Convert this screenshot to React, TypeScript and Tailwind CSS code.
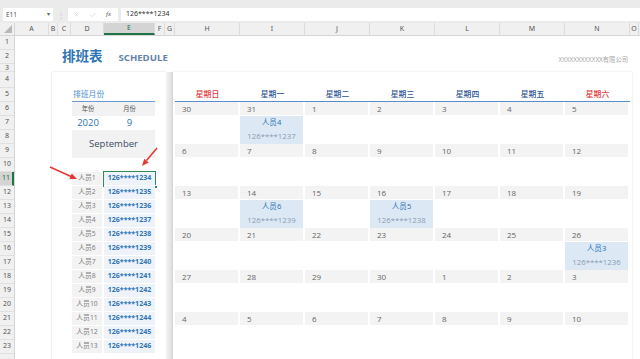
import React from "react";
import { X, Check } from "lucide-react";

const cols: { l: string; c: string; sel?: boolean }[] = [
  { l: "A", c: "w-[34px]" },
  { l: "B", c: "w-[9px]" },
  { l: "C", c: "w-[13px]" },
  { l: "D", c: "w-[33px]" },
  { l: "E", c: "w-[51px]", sel: true },
  { l: "F", c: "w-[10px]" },
  { l: "G", c: "w-[10px]" },
  { l: "H", c: "w-[65px]" },
  { l: "I", c: "w-[65px]" },
  { l: "J", c: "w-[65px]" },
  { l: "K", c: "w-[65px]" },
  { l: "L", c: "w-[65px]" },
  { l: "M", c: "w-[65px]" },
  { l: "N", c: "w-[65px]" },
  { l: "O", c: "w-[9px]" },
];

const rows: { n: number; c: string }[] = [
  { n: 1, c: "h-[14px]" },
  { n: 2, c: "h-[14px]" },
  { n: 3, c: "h-[8px] text-[5px] leading-none" },
  { n: 4, c: "h-[16px]" },
  { n: 5, c: "h-[14px]" },
  ...Array.from({ length: 18 }, (_, i) => ({ n: i + 6, c: "h-[14px]" })),
];

const people = Array.from({ length: 13 }, (_, i) => ({
  name: `人员${i + 1}`,
  phone: `126****${1234 + i}`,
}));

const days = ["星期日", "星期一", "星期二", "星期三", "星期四", "星期五", "星期六"];

const weeks = [
  [30, 31, 1, 2, 3, 4, 5],
  [6, 7, 8, 9, 10, 11, 12],
  [13, 14, 15, 16, 17, 18, 19],
  [20, 21, 22, 23, 24, 25, 26],
  [27, 28, 29, 30, 1, 2, 3],
  [4, 5, 6, 7, 8, 9, 10],
];

const events: Record<string, { name: string; phone: string }> = {
  "0-1": { name: "人员4", phone: "126****1237" },
  "2-1": { name: "人员6", phone: "126****1239" },
  "2-3": { name: "人员5", phone: "126****1238" },
  "3-6": { name: "人员3", phone: "126****1236" },
};

export default function App() {
  return (
    <div className="relative w-[640px] h-[359px] overflow-hidden bg-white font-['Noto_Sans','Noto_Sans_CJK_SC',sans-serif] text-[#444]">
      {/* formula bar */}
      <div className="h-[23px] bg-[#ebebeb] flex items-start pt-[8px]">
        <div className="ml-[3px] w-[50px] h-[13px] bg-white flex items-center justify-between px-[3px] text-[6.5px] text-[#555]">
          <span>E11</span>
          <span className="text-[6px] text-[#666]">▾</span>
        </div>
        <div className="w-[15px] h-[13px] flex items-center justify-center text-[8px] text-[#c4c4c4]">⋮</div>
        <div className="w-[50px] h-[13px] bg-white flex items-center pl-[5px] gap-[9px]">
          <X size={7} strokeWidth={1.5} color="#bdbdbd" />
          <Check size={8} strokeWidth={1.5} color="#bdbdbd" />
          <span className="italic text-[7px] text-[#555] font-['Liberation_Serif',serif]">fx</span>
        </div>
        <div className="ml-[3px] flex-1 h-[13px] bg-white flex items-center pl-[5px] text-[7px] text-[#333]">126****1234</div>
      </div>

      {/* column headers */}
      <div className="h-[13px] flex bg-[#f0f0f0] border-b border-[#d6d6d6]">
        <div className="w-[15px] shrink-0 relative border-r border-[#d6d6d6]">
          <svg width="8" height="8" className="absolute right-[2px] bottom-[2px]">
            <polygon points="8,0 8,8 0,8" fill="#b8b8b8" />
          </svg>
        </div>
        {cols.map((c) => (
          <div
            key={c.l}
            className={`${c.c} shrink-0 flex items-center justify-center text-[7px] border-r border-[#dcdcdc] ${
              c.sel ? "bg-[#d4d4d4] border-b-2 border-b-[#217346] text-[#217346]" : "text-[#555]"
            }`}
          >
            {c.l}
          </div>
        ))}
      </div>

      {/* body */}
      <div className="flex">
        {/* row headers */}
        <div className="w-[15px] shrink-0 flex flex-col bg-[#f0f0f0] border-r border-[#d6d6d6] h-[323px]">
          {rows.map((r) => (
            <div
              key={r.n}
              className={`${r.c} shrink-0 flex items-center justify-center text-[7px] border-b border-[#e0e0e0] overflow-hidden ${
                r.n === 11 ? "bg-[#d4d4d4] text-[#217346] border-r-2 border-r-[#217346]" : "text-[#555]"
              }`}
            >
              {r.n}
            </div>
          ))}
        </div>

        {/* sheet */}
        <div className="flex-1 flex flex-col">
          <div className="h-[14px]" />
          <div className="h-[14px] flex items-center pl-[47px] pr-[12px]">
            <span className="text-[13.5px] font-bold text-[#2e75b6] leading-none">排班表</span>
            <span className="ml-[16px] text-[9.6px] font-bold text-[#6483a8] font-['Open_Sans',sans-serif] leading-none mt-[2px]">SCHEDULE</span>
            <span className="ml-auto text-[6.3px] text-[#a8a8a8] mt-[6px]">XXXXXXXXXXXX有限公司</span>
          </div>
          <div className="h-[8px]" />

          <div className="flex h-[300px]">
            {/* left card */}
            <div className="ml-[37px] w-[114px] shrink-0 bg-white shadow-[0_0_2px_rgba(0,0,0,0.15)] pt-[16px]">
              <div className="ml-[20px] w-[83px]">
                <div className="h-[14px] border-b-[1.5px] border-[#6b9bd1] flex items-center pl-[1px] text-[7.8px] text-[#4a8bd0]">
                  排班月份
                </div>
                <div className="h-[14px] grid grid-cols-[32px_51px] bg-[#f2f2f2] text-[6.3px] text-[#555] items-center text-center">
                  <span>年份</span>
                  <span>月份</span>
                </div>
                <div className="h-[14px] grid grid-cols-[32px_51px] text-[9.5px] text-[#2e75b6] items-center text-center font-['Open_Sans',sans-serif]">
                  <span>2020</span>
                  <span>9</span>
                </div>
                <div className="h-[28px] bg-[#f2f2f2] flex items-center justify-center text-[9.5px] text-[#3c4c63] font-['Open_Sans',sans-serif]">
                  September
                </div>
                <div className="h-[14px]" />
                {people.map((p, i) => (
                  <div key={p.name} className="h-[14px] grid grid-cols-[32px_51px] pb-[1px]">
                    <div className="bg-[#f3f3f3] mr-[2px] flex items-center justify-center text-[6.8px] text-[#7f7f7f]">
                      {p.name}
                    </div>
                    <div className="relative bg-[#eef3f9] flex items-center justify-center text-[7px] font-bold text-[#2e75b6] font-['Open_Sans',sans-serif]">
                      {p.phone}
                      {i === 0 && (
                        <div className="absolute -top-[1px] -left-[1px] -right-[1px] -bottom-[2px] border-[1.5px] border-[#2f8a55]">
                          <div className="absolute -right-[3px] -bottom-[3px] w-[4px] h-[4px] bg-[#2f8a55] border border-white" />
                        </div>
                      )}
                    </div>
                  </div>
                ))}
              </div>
            </div>

            {/* separator shadow */}
            <div className="w-[7px] shrink-0 bg-gradient-to-r from-[#f4f4f4] to-[#dcdcdc]" />

            {/* right card */}
            <div className="w-[459px] shrink-0 bg-white shadow-[0_0_2px_rgba(0,0,0,0.12)] pt-[16px]">
              <div className="ml-[2px] w-[455px]">
                <div className="h-[14px] grid grid-cols-7 border-b-[1.5px] border-[#5b8fc9] text-[7.8px] font-medium items-center text-center">
                  {days.map((d, i) => (
                    <span key={d} className={i === 0 || i === 6 ? "text-[#e0393e]" : "text-[#2f5597]"}>
                      {d}
                    </span>
                  ))}
                </div>
                {weeks.map((w, wi) => (
                  <div key={wi}>
                    <div className="h-[14px] grid grid-cols-7">
                      {w.map((d, di) => (
                        <div
                          key={di}
                          className="bg-[#f3f3f3] mr-[2px] mb-[1px] flex items-center pl-[7px] text-[8px] text-[#666] font-['Open_Sans',sans-serif]"
                        >
                          {d}
                        </div>
                      ))}
                    </div>
                    <div className="h-[28px] grid grid-cols-7">
                      {w.map((_, di) => {
                        const ev = events[`${wi}-${di}`];
                        return ev ? (
                          <div key={di} className="bg-[#dce9f5] mr-[2px] flex flex-col">
                            <div className="h-[14px] flex items-center justify-center text-[7.6px] text-[#2e75b6]">{ev.name}</div>
                            <div className="h-[14px] flex items-center justify-center text-[7.8px] text-[#8a9bb3] font-['Open_Sans',sans-serif]">
                              {ev.phone}
                            </div>
                          </div>
                        ) : (
                          <div key={di} />
                        );
                      })}
                    </div>
                  </div>
                ))}
              </div>
            </div>
          </div>
        </div>
      </div>

      {/* red arrows */}
      <svg className="absolute left-0 top-0 pointer-events-none" width="640" height="359">
        <line x1="50" y1="167" x2="71" y2="176.4" stroke="#e53935" strokeWidth="1.6" />
        <polygon points="77,179 69.4,178.9 71.8,173.5" fill="#e53935" />
        <line x1="157" y1="148" x2="146.5" y2="160.6" stroke="#e53935" strokeWidth="1.6" />
        <polygon points="142,166 148.8,162.5 144.2,158.7" fill="#e53935" />
      </svg>
    </div>
  );
}
